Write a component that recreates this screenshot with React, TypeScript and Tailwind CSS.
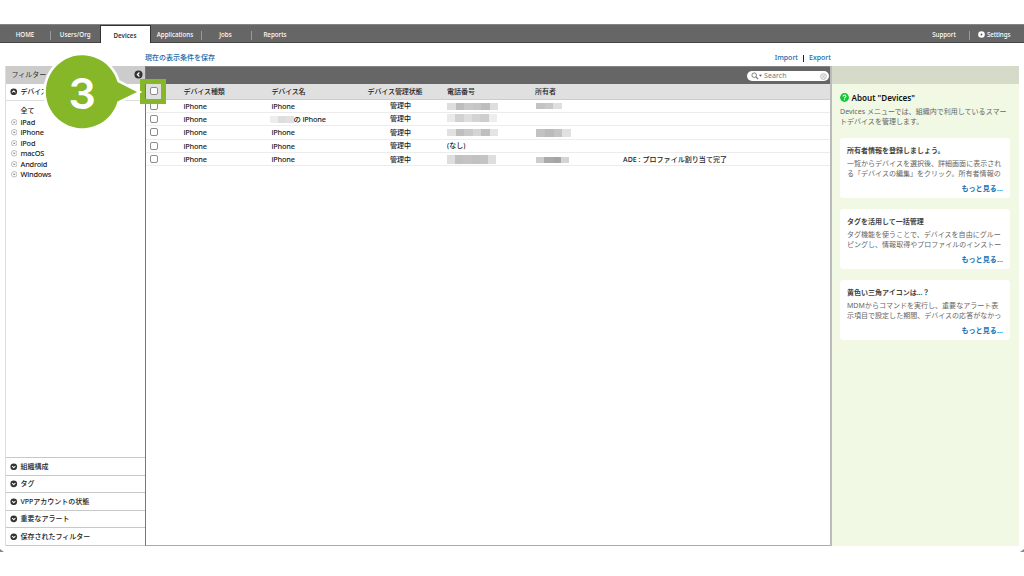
import { ReactNode } from 'react';

const NAV_TABS = [
  { label: 'Applications', width: 'w-[51px]' },
  { label: 'Jobs', width: 'w-[50px]' },
  { label: 'Reports', width: 'w-[49px]' },
];

const DEVICE_TYPES = ['iPad', 'iPhone', 'iPod', 'macOS', 'Android', 'Windows'];

const FILTER_SECTIONS = ['組織構成', 'タグ', 'VPPアカウントの状態', '重要なアラート', '保存されたフィルター'];

const TIPS = [
  {
    title: '所有者情報を登録しましょう。',
    lines: ['一覧からデバイスを選択後、詳細画面に表示され', 'る「デバイスの編集」をクリック。所有者情報の'],
  },
  {
    title: 'タグを活用して一括管理',
    lines: ['タグ機能を使うことで、デバイスを自由にグルー', 'ピングし、情報取得やプロファイルのインストー'],
  },
  {
    title: '黄色い三角アイコンは...？',
    lines: ['MDMからコマンドを実行し、重要なアラート表', '示項目で設定した期間、デバイスの応答がなかっ'],
  },
];

const COLS = 'grid grid-cols-[37.5px_88px_88px_87.5px_88px_88px_1fr]';

function Mosaic({ className, cells }: { className: string; cells: string[] }) {
  return (
    <div className={`flex ${className}`}>
      {cells.map((c, i) => (
        <div key={i} className={`h-full flex-1 ${c}`} />
      ))}
    </div>
  );
}

function ChevronDot({ dir, className = '' }: { dir: 'up' | 'down' | 'left'; className?: string }) {
  const d = {
    up: 'M2.2 4.8 L4 3 L5.8 4.8',
    down: 'M2.2 3.2 L4 5 L5.8 3.2',
    left: 'M4.8 2.2 L3 4 L4.8 5.8',
  }[dir];
  return (
    <svg className={className} viewBox="0 0 8 8">
      <circle cx="4" cy="4" r="3.6" fill="#333" />
      <path d={d} fill="none" stroke="#fff" strokeWidth="1.1" />
    </svg>
  );
}

function Checkbox() {
  return <div className="ml-[3.5px] h-[8px] w-[8px] rounded-[2px] border border-[#8c8c8c] bg-white" />;
}

function NavBar() {
  return (
    <nav className="flex h-[19px] border-t border-b border-t-[#858585] border-b-[#444] bg-[#666] text-[6.2px] leading-[20px] font-medium text-white">
      <div className="flex w-[50px] items-center justify-center pt-[2px]">HOME</div>
      <div className="mt-[6px] h-[9px] w-px bg-[#999]" />
      <div className="flex w-[48.5px] items-center justify-center pt-[2px] tracking-[0.05px]">Users/Org</div>
      <div className="flex h-[18px] w-[51px] items-center justify-center border-x border-t border-[#333] bg-white pt-[2px] font-semibold text-[#333]">
        Devices
      </div>
      {NAV_TABS.map((tab, i) => (
        <div key={tab.label} className="flex">
          <div className={`${tab.width} flex items-center justify-center pt-[2px] pr-[2px]`}>{tab.label}</div>
          {i < 2 && <div className="mt-[6px] -ml-px h-[9px] w-px bg-[#999]" />}
        </div>
      ))}
      <div className="ml-auto flex w-[50px] items-center justify-center pt-[2px]">Support</div>
      <div className="mt-[6px] h-[9px] w-px bg-[#999]" />
      <div className="flex w-[54px] items-center pt-[2px] pl-[8px]">
        <svg className="mr-[2px] h-[7px] w-[7px]" viewBox="0 0 7 7">
          <circle cx="3.5" cy="3.5" r="3.3" fill="#fff" />
          <circle cx="3.5" cy="3.5" r="0.9" fill="#555" />
        </svg>
        <span className="tracking-[-0.1px]">Settings</span>
      </div>
    </nav>
  );
}

function Sidebar() {
  return (
    <aside className="flex w-[140.5px] shrink-0 flex-col border-l border-[#ddd] text-[7px] font-medium text-[#222]">
      <div className="flex h-[17.5px] items-center justify-between bg-[#ccc] pr-[2px] pl-[6px] font-normal text-[#333]">
        フィルター
        <ChevronDot dir="left" className="h-[9px] w-[9px]" />
      </div>
      <div className="flex h-[17px] items-center border-b border-[#ddd] pl-[4.5px]">
        <ChevronDot dir="up" className="mr-[3px] h-[7.5px] w-[7.5px]" />
        <span className="pt-px tracking-[-0.3px]">デバイス種類</span>
      </div>
      <div className="flex-1 pt-[5.6px] pl-[5px] leading-[10.55px]">
        <div className="pl-[10px]">全て</div>
        {DEVICE_TYPES.map((type) => (
          <div key={type} className="flex items-center text-[7.4px] tracking-[-0.2px]">
            <svg className="mr-[3.5px] h-[6.5px] w-[6.5px]" viewBox="0 0 7 7">
              <circle cx="3.5" cy="3.5" r="3" fill="none" stroke="#999" strokeWidth="0.7" />
              <path d="M2 3 L3.5 4.6 L5 3Z" fill="#777" />
            </svg>
            {type}
          </div>
        ))}
      </div>
      {FILTER_SECTIONS.map((label) => (
        <div key={label} className="flex h-[17.6px] items-center border-t border-[#c8c8c8] pl-[4.5px]">
          <ChevronDot dir="down" className="mr-[3px] h-[7.5px] w-[7.5px]" />
          <span className="pt-px">{label}</span>
        </div>
      ))}
      <div className="h-px bg-[#c8c8c8]" />
    </aside>
  );
}

function DeviceRow({ name, phone, owner, status }: { name?: ReactNode; phone: ReactNode; owner?: ReactNode; status?: string }) {
  return (
    <div className={`${COLS} h-[13.4px] items-center border-b border-[#ececec]`}>
      <Checkbox />
      <div className="pt-px text-[7.4px] tracking-[-0.2px]">iPhone</div>
      <div className="pt-px text-[7.4px] tracking-[-0.2px]">{name ?? 'iPhone'}</div>
      <div className="pt-px pl-[30.5px]">管理中</div>
      <div>{phone}</div>
      <div>{owner}</div>
      <div className="pt-px tracking-[0.05px]">{status}</div>
    </div>
  );
}

function DeviceTable() {
  return (
    <main className="flex min-w-0 flex-1 flex-col border-r-2 border-b border-l border-r-[#bbb] border-b-[#aaa] border-l-[#777] text-[7px] font-medium text-[#222]">
      <div className="flex h-[18px] items-center justify-end border-t border-[#858585] bg-[#666] pt-px pr-[1px]">
        <div className="flex h-[10.5px] w-[82px] items-center rounded-full bg-white pr-[2.5px] pl-[4px] font-normal text-[#777]">
          <svg className="h-[8px] w-[12px]" viewBox="0 0 12 8">
            <circle cx="3.2" cy="3.2" r="2.3" fill="none" stroke="#777" strokeWidth="0.9" />
            <path d="M5 5 L7.2 7.2" stroke="#777" strokeWidth="1.1" />
            <path d="M8 2.8 H11 L9.5 4.8Z" fill="#555" />
          </svg>
          <span className="ml-[1px] pt-px tracking-[0.1px]">Search</span>
          <svg className="ml-auto h-[7px] w-[7px]" viewBox="0 0 7 7">
            <circle cx="3.5" cy="3.5" r="2.9" fill="#eee" stroke="#bbb" strokeWidth="0.9" />
            <path d="M2.4 2.4 L4.6 4.6 M4.6 2.4 L2.4 4.6" stroke="#aaa" strokeWidth="0.7" />
          </svg>
        </div>
      </div>
      <div className={`${COLS} h-[15.5px] items-center border-b border-[#ccc] bg-[#e0e0e0]`}>
        <Checkbox />
        <div className="pt-px tracking-[-0.1px]">デバイス種類</div>
        <div className="pt-px tracking-[-0.2px]">デバイス名</div>
        <div className="pt-px pl-[8px] tracking-[-0.1px]">デバイス管理状態</div>
        <div className="pt-px">電話番号</div>
        <div className="pt-px">所有者</div>
        <div />
      </div>
      <DeviceRow
        phone={<Mosaic className="mt-[2px] h-[7px] w-[51px]" cells={['bg-[#dedede]', 'bg-[#bdbdbd]', 'bg-[#c9c9c9]', 'bg-[#c5c5c5]', 'bg-[#bdbdbd]', 'bg-[#dedede]']} />}
        owner={<Mosaic className="mt-px ml-[1px] h-[6.5px] w-[26px]" cells={['bg-[#c3c3c3]', 'bg-[#c9c9c9]', 'bg-[#dfdfdf]']} />}
      />
      <DeviceRow
        name={
          <div className="flex items-center">
            <Mosaic className="-ml-[2px] h-[7.5px] w-[24px]" cells={['bg-[#ededed]', 'bg-[#dedede]', 'bg-[#e1e1e1]']} />
            <span>の iPhone</span>
          </div>
        }
        phone={<Mosaic className="-mt-[2px] h-[8px] w-[50px]" cells={['bg-[#eaeaea]', 'bg-[#d2d2d2]', 'bg-[#dedede]', 'bg-[#d4d4d4]', 'bg-[#cecece]', 'bg-[#eeeeee]']} />}
      />
      <DeviceRow
        phone={<Mosaic className="h-[7px] w-[51px]" cells={['bg-[#e1e1e1]', 'bg-[#bebebe]', 'bg-[#c9c9c9]', 'bg-[#d4d4d4]', 'bg-[#bfbfbf]', 'bg-[#e4e4e4]']} />}
        owner={<Mosaic className="mt-[1.5px] ml-[1px] h-[8.5px] w-[35px]" cells={['bg-[#c3c3c3]', 'bg-[#bbbbbb]', 'bg-[#c4c4c4]', 'bg-[#e1e1e1]']} />}
      />
      <DeviceRow phone={<span className="block pt-px">(なし)</span>} />
      <DeviceRow
        phone={<Mosaic className="h-[8.5px] w-[49px]" cells={['bg-[#dedede]', 'bg-[#c1c1c1]', 'bg-[#c4c4c4]', 'bg-[#c1c1c1]', 'bg-[#c4c4c4]', 'bg-[#dedede]']} />}
        owner={<Mosaic className="mt-px ml-[1px] h-[6.5px] w-[33px]" cells={['bg-[#cccccc]', 'bg-[#aaaaaa]', 'bg-[#a5a5a5]', 'bg-[#d4d4d4]']} />}
        status="ADE : プロファイル割り当て完了"
      />
    </main>
  );
}

function HelpPanel() {
  return (
    <aside className="w-[187px] shrink-0 bg-[#f1f8e4] text-[7px] text-[#666]">
      <div className="h-[17.5px] bg-[#d6dac8]" />
      <div className="pr-[9px] pl-[8px]">
        <h2 className="mt-[8px] flex h-[12px] items-center text-[8.1px] font-semibold text-[#111]">
          <svg className="mr-[2.5px] h-[9px] w-[9px]" viewBox="0 0 9 9">
            <circle cx="4.5" cy="4.5" r="4.4" fill="#0fc832" />
            <path d="M3.1 3.4 C3.1 1.6 5.9 1.7 5.9 3.4 C5.9 4.3 4.5 4.3 4.5 5.4 M4.5 6.3 V7.3" fill="none" stroke="#fff" strokeWidth="1.1" />
          </svg>
          <span className="pt-px">About "Devices"</span>
        </h2>
        <p className="mt-[3px] leading-[10.5px] tracking-[0.02px] whitespace-nowrap">
          Devices メニューでは、組織内で利用しているスマー
          <br />
          トデバイスを管理します。
        </p>
        <div className="mt-[10px] flex flex-col gap-[11px]">
          {TIPS.map((tip) => (
            <section key={tip.title} className="h-[60px] rounded-[3px] bg-white px-[7px] pt-[7px]">
              <h3 className="leading-[11px] font-semibold text-[#444]">{tip.title}</h3>
              <p className="mt-[3px] leading-[10.5px] tracking-[0.02px] whitespace-nowrap">
                {tip.lines[0]}
                <br />
                {tip.lines[1]}
              </p>
              <a className="mt-[3px] block text-right leading-[11px] font-semibold tracking-[0.1px] text-[#1772b4]">もっと見る...</a>
            </section>
          ))}
        </div>
      </div>
    </aside>
  );
}

function StepCallout() {
  return (
    <>
      <div className="absolute top-[78.5px] left-[140px] h-[25.5px] w-[25.5px] border-[5px] border-[#86b728]" />
      <div className="absolute top-[50px] left-[40px] h-[84px] w-[102px]">
        <svg className="absolute inset-0 h-full w-full" viewBox="40 50 102 84">
          <path
            d="M117.5 82 L137 92 L117.5 101.5 A36.5 36.5 0 1 1 117.5 82 Z"
            fill="#86b728"
            stroke="#fff"
            strokeWidth="5"
            paintOrder="stroke"
          />
        </svg>
        <span className="absolute top-[18px] left-[28.5px] font-['Inter'] text-[43px] leading-[50px] font-semibold text-white">3</span>
      </div>
    </>
  );
}

export default function App() {
  return (
    <div lang="ja" className="relative flex h-[576px] w-[1024px] flex-col overflow-hidden bg-white pt-[24px] font-['Noto_Sans','Noto_Sans_CJK_JP',sans-serif]">
      <NavBar />
      <div className="flex h-[23px] items-center justify-between pt-[8px] pr-[193px] pl-[145px] text-[7px] font-medium text-[#1768a8]">
        <a>現在の表示条件を保存</a>
        <div className="flex items-center">
          <a>Import</a>
          <span className="mx-[5px] h-[7px] w-px bg-[#222]" />
          <a>Export</a>
        </div>
      </div>
      <div className="flex h-[480px] pr-[5px] pl-[4.5px]">
        <Sidebar />
        <DeviceTable />
        <HelpPanel />
      </div>
      <svg className="mt-[3px] h-[4px] w-full" viewBox="0 0 1024 4">
        <path d="M0 0 L4 3 H0Z M1024 0 L1020 3 H1024Z" fill="#888" />
      </svg>
      <StepCallout />
    </div>
  );
}
